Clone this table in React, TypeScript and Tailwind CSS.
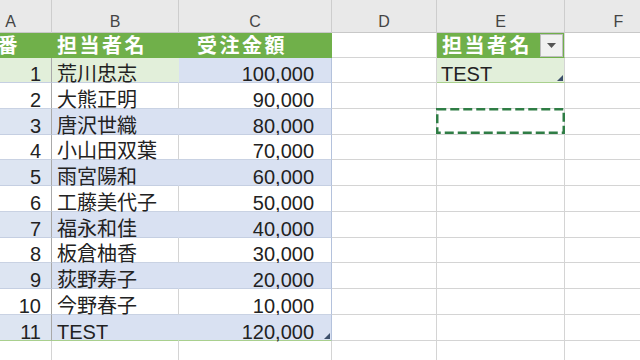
import React from "react";

const FONT = { fontFamily: '"Liberation Sans", "Noto Sans CJK JP", sans-serif' };

type Row = { n: number; name: string; amt: string };
const rows: Row[] = [
  { n: 1, name: "荒川忠志", amt: "100,000" },
  { n: 2, name: "大熊正明", amt: "90,000" },
  { n: 3, name: "唐沢世織", amt: "80,000" },
  { n: 4, name: "小山田双葉", amt: "70,000" },
  { n: 5, name: "雨宮陽和", amt: "60,000" },
  { n: 6, name: "工藤美代子", amt: "50,000" },
  { n: 7, name: "福永和佳", amt: "40,000" },
  { n: 8, name: "板倉柚香", amt: "30,000" },
  { n: 9, name: "荻野寿子", amt: "20,000" },
  { n: 10, name: "今野春子", amt: "10,000" },
  { n: 11, name: "TEST", amt: "120,000" },
];

const dataH = ["h-[25px]", "h-[26px]", "h-[26px]", "h-[25px]", "h-[26px]", "h-[26px]", "h-[26px]", "h-[25px]", "h-[26px]", "h-[26px]", "h-[26px]"];

const Handle = () => (
  <svg className="absolute right-[1px] bottom-[1px]" width="6" height="6" viewBox="0 0 6 6">
    <polygon points="6,0 6,6 0,6" fill="#3d4f6b" />
  </svg>
);

function Cell({ className = "", children }: { className?: string; children?: React.ReactNode }) {
  return <div className={`relative flex shrink-0 items-end border-r border-b ${className}`}>{children}</div>;
}

export default function App() {
  return (
    <div className="w-[640px] h-[360px] overflow-hidden bg-white text-[#222]" style={FONT}>
      <div className="ml-[-30px] flex flex-col w-[703px]">
        <div className="flex h-[33px] bg-[#e9e9e9] text-[16px] leading-[16px] text-[#444]">
          {[
            ["A", "w-[82px]"],
            ["B", "w-[127px]"],
            ["C", "w-[153px]"],
            ["D", "w-[105px]"],
            ["E", "w-[128px]"],
            ["F", "w-[108px]"],
          ].map(([l, w]) => (
            <div key={l} className={`${w} flex shrink-0 items-end justify-center border-r border-b border-r-[#cdcdcd] border-b-[#c8c8c8] pb-[2px]`}>
              {l}
            </div>
          ))}
        </div>

        <div className="flex h-[25px] text-[20px] leading-[16px]">
          <Cell className="w-[82px] bg-[#70b04a] border-[#70b04a] pl-[5px] pb-[3px] text-white font-bold tracking-[2.5px]">連番</Cell>
          <Cell className="w-[127px] bg-[#70b04a] border-[#70b04a] pl-[5px] pb-[3px] text-white font-bold tracking-[2.5px]">担当者名</Cell>
          <Cell className="w-[153px] bg-[#70b04a] border-[#70b04a] pl-[18px] pb-[3px] text-white font-bold tracking-[2.5px]">受注金額</Cell>
          <Cell className="w-[105px] border-[#d4d4d4]" />
          <Cell className="w-[128px] bg-[#70b04a] border-r-[#d4d4d4] border-b-[#70b04a] pl-[5px] pb-[3px] text-white font-bold tracking-[2.5px]">
            担当者名
            <div className="absolute right-[1px] top-[1px] w-[23px] h-[23px] bg-[#f1f1f1] border border-[#bdbdbd] flex items-center justify-center">
              <svg width="9" height="5" viewBox="0 0 9 5">
                <polygon points="0,0 9,0 4.5,5" fill="#555" />
              </svg>
            </div>
          </Cell>
          <Cell className="w-[108px] border-[#d4d4d4]" />
        </div>

        {rows.map((r, i) => {
          const odd = r.n % 2 === 1;
          const first = r.n === 1;
          const last = r.n === 11;
          const aBg = first ? "bg-[#e2efda]" : odd ? "bg-[#dde5f2]" : "bg-white";
          const bBg = first ? "bg-[#e2efda]" : odd ? "bg-[#d9e1f2]" : "bg-white";
          const cBg = odd ? "bg-[#d9e1f2]" : "bg-white";
          const bBorderB = last ? "border-b-[#a9d08e]" : odd ? "border-b-[#c5cfe2]" : "border-b-[#c9d2e3]";
          return (
            <div key={r.n} className={`flex ${dataH[i]} text-[20px] leading-[16px]`}>
              <Cell className={`w-[82px] ${aBg} justify-end pr-[10px] border-r-[#a9a9a9] ${bBorderB}`}>{r.n}</Cell>
              <Cell className={`w-[127px] ${bBg} pl-[5px] ${odd ? "border-r-transparent" : "border-r-[#d4d4d4]"} ${bBorderB}`}>{r.name}</Cell>
              <Cell className={`w-[153px] ${cBg} justify-end pr-[17px] border-r-[#b4c2dc] ${bBorderB}`}>
                {r.amt}
                {last && <Handle />}
              </Cell>
              <Cell className="w-[105px] border-[#d4d4d4]" />
              {r.n === 1 ? (
                <Cell className="w-[128px] bg-[#e2efda] pl-[4px] border-r-[#d4d4d4] border-b-[#a9d08e]">
                  TEST
                  <Handle />
                </Cell>
              ) : r.n === 3 ? (
                <Cell className="w-[128px] border-[#d4d4d4]">
                  <svg className="absolute left-[-1px] top-[-1px]" width="129" height="26" viewBox="0 0 129 26">
                    <rect x="1.25" y="1.25" width="126.5" height="23.5" fill="none" stroke="#2f7d45" strokeWidth="2.5" strokeDasharray="9 4" />
                  </svg>
                </Cell>
              ) : (
                <Cell className="w-[128px] border-[#d4d4d4]" />
              )}
              <Cell className="w-[108px] border-[#d4d4d4]" />
            </div>
          );
        })}

        <div className="flex h-[26px]">
          <Cell className="w-[82px] border-[#d4d4d4]" />
          <Cell className="w-[127px] border-[#d4d4d4]" />
          <Cell className="w-[153px] border-[#d4d4d4]" />
          <Cell className="w-[105px] border-[#d4d4d4]" />
          <Cell className="w-[128px] border-[#d4d4d4]" />
          <Cell className="w-[108px] border-[#d4d4d4]" />
        </div>
      </div>
    </div>
  );
}
